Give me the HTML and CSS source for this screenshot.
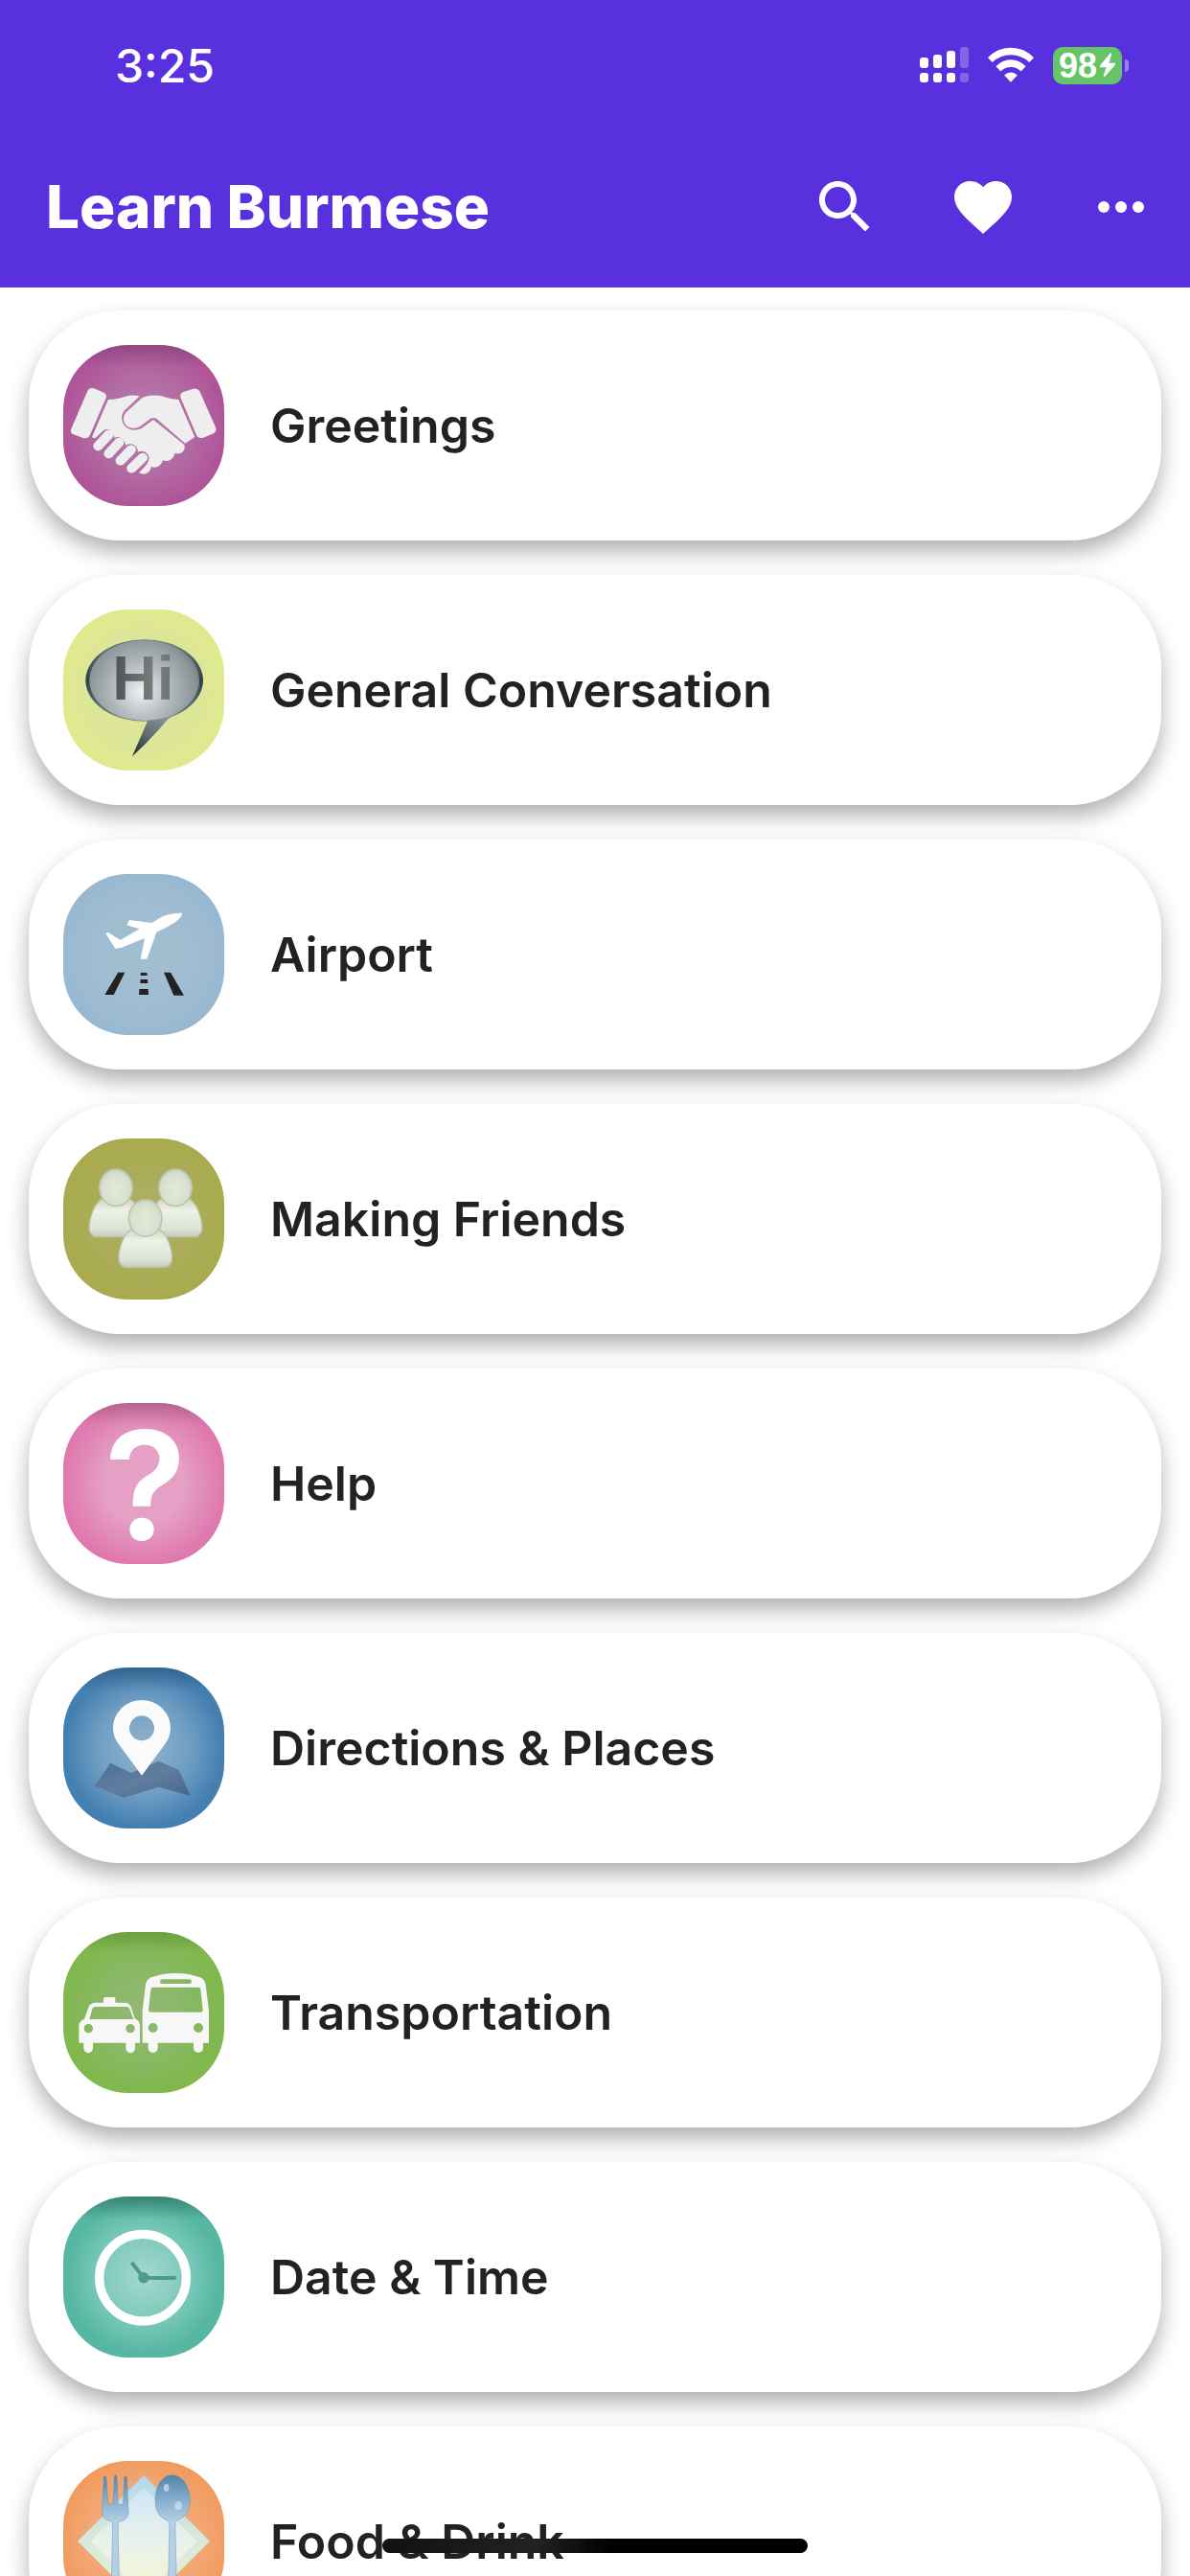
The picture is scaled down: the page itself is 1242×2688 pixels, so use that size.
FILE: index.html
```html
<!DOCTYPE html>
<html lang="en">
<head>
    <meta charset="UTF-8">
    <meta name="viewport" content="width=device-width, initial-scale=1.0">
    <title>Learn Burmese</title>
    <link rel="stylesheet" href="styles.css">
</head>
<body>
    <header>
        <div class="status-bar">
            <span class="time">3:25</span>
            <div class="status-icons">
                <svg width="51" height="38" viewBox="0 0 51 38" fill="white">
                    <rect x="0" y="11" width="9" height="11" rx="3"/>
                    <rect x="14" y="8" width="9" height="14" rx="3"/>
                    <rect x="28" y="4" width="9" height="18" rx="3"/>
                    <rect x="42" y="0" width="9" height="22" rx="3" opacity="0.25"/>
                    <rect x="0" y="27" width="9" height="10" rx="3"/>
                    <rect x="14" y="27" width="9" height="10" rx="3"/>
                    <rect x="28" y="27" width="9" height="10" rx="3"/>
                    <rect x="42" y="27" width="9" height="10" rx="3" opacity="0.25"/>
                </svg>
                <svg width="48" height="38" viewBox="695 146 143 112" fill="white">
                    <path d="M695 179 Q725 148 766.500 148 Q808 148 838 179 L824 193 Q799 170 766.500 170 Q734 170 709 193 Z"/>
                    <path d="M720 206 Q740 185 766.500 185 Q793 185 813 206 L798 221 Q784 208 766.500 208 Q749 208 735 221 Z"/>
                    <path d="M746 233 Q755 224 766.500 224 Q778 224 787 233 L766.500 255 Z"/>
                </svg>
                <div class="battery">
                    <span>98</span>
                    <svg width="18" height="26" viewBox="1047 163 52 79" fill="white">
                        <path d="M1082 164 Q1087 163 1085 170 L1077 196 H1095 Q1100 197 1097 202 L1064 239 Q1059 243 1060 236 L1069 209 H1050 Q1046 208 1049 203 Z"/>
                    </svg>
                </div>
            </div>
        </div>
        <div class="app-bar">
            <h1>Learn Burmese</h1>
            <button aria-label="Search">
                <svg viewBox="0 0 24 24"><path d="M15.500 14h-.79l-.28-.27C15.410 12.590 16 11.110 16 9.500 16 5.910 13.090 3 9.500 3S3 5.910 3 9.500 5.910 16 9.500 16c1.610 0 3.090-.59 4.230-1.570l.27.28v.79l5 4.990L20.490 19l-4.990-5zm-6 0C7.010 14 5 11.990 5 9.500S7.010 5 9.500 5 14 7.010 14 9.500 11.990 14 9.500 14z"/></svg>
            </button>
            <button aria-label="Favorites">
                <svg viewBox="0 0 24 24"><path d="M12 21.350l-1.450-1.320C5.400 15.360 2 12.280 2 8.500 2 5.420 4.420 3 7.500 3c1.740 0 3.410.81 4.500 2.090C13.090 3.810 14.760 3 16.500 3 19.580 3 22 5.420 22 8.500c0 3.780-3.400 6.860-8.550 11.540L12 21.350z"/></svg>
            </button>
            <button aria-label="More">
                <svg viewBox="0 0 24 24"><circle cx="6" cy="12" r="2"/><circle cx="12" cy="12" r="2"/><circle cx="18" cy="12" r="2"/></svg>
            </button>
        </div>
    </header>

    <main>
        <ul class="topics">
            <li><a href="#greetings">
                <svg class="icon greetings" viewBox="129 150 470 504" preserveAspectRatio="none">
                    <g fill="#eeeeee">
                        <path d="M201 292 Q207 282 219 286 L248 299 Q257 304 254 316 L206 434 Q200 444 187 441 L159 430 Q149 425 152 413 Z"/>
                        <path d="M478 298 L508 287 Q522 284 527 294 L574 408 Q578 420 568 427 L538 440 Q525 444 519 434 L472 316 Q469 303 478 298 Z"/>
                        <path d="M260 321 Q290 319 310 311 Q332 305 352 310 L306 357 Q293 376 307 401 Q327 424 357 412 L392 384 L483 463 Q487 482 472 488 Q463 491 455 488 Q450 509 434 513 Q427 514 420 511 Q414 532 396 533 Q390 533 386 531 Q384 547 371 553 Q360 557 350 550 L372 525 Q388 501 370 486 Q360 480 347 484 Q346 464 327 460 Q318 459 312 464 Q308 443 291 438 Q284 437 279 441 Q274 415 257 413 Q247 414 240 424 L224 440 Q217 443 213 438 Z"/>
                        <path d="M357 317 Q385 301 421 311 Q444 320 466 321 L513 438 L485 458 L403 382 Q392 374 382 382 L352 406 Q328 418 311 400 Q299 382 311 362 Z"/>
                    </g>
                    <g stroke="#eeeeee" stroke-width="29" stroke-linecap="round">
                        <path d="M262 430 L231 466"/>
                        <path d="M292 455 L262 490"/>
                        <path d="M327 478 L296 512"/>
                        <path d="M361 503 L329 536"/>
                    </g>
                </svg>
                <span>Greetings</span>
            </a></li>
            <li><a href="#general">
                <svg class="icon general" viewBox="30 48 504 504">
                    <defs>
                        <radialGradient id="bubble" gradientUnits="userSpaceOnUse" cx="275" cy="305" r="210">
                            <stop offset="0" stop-color="#eef1f2"/>
                            <stop offset="0.4" stop-color="#b6bcbf"/>
                            <stop offset="0.8" stop-color="#8a9597"/>
                            <stop offset="1" stop-color="#5c6c70"/>
                        </radialGradient>
                        <linearGradient id="tail" x1="0.6" y1="0" x2="0" y2="1">
                            <stop offset="0" stop-color="#8b9699"/>
                            <stop offset="0.5" stop-color="#5d6c70"/>
                            <stop offset="1" stop-color="#152a30"/>
                        </linearGradient>
                        <linearGradient id="rim" x1="0" y1="0" x2="0" y2="1">
                            <stop offset="0" stop-color="#6f7d80"/>
                            <stop offset="0.5" stop-color="#2c4247"/>
                            <stop offset="1" stop-color="#7d898b"/>
                        </linearGradient>
                        <linearGradient id="hi" x1="0" x2="1">
                            <stop offset="0" stop-color="#4e5254"/>
                            <stop offset="0.7" stop-color="#7c7f80"/>
                            <stop offset="1" stop-color="#6c7072"/>
                        </linearGradient>
                    </defs>
                    <ellipse cx="284" cy="270" rx="184" ry="128" fill="url(#rim)"/>
                    <path d="M294 397 L246 508 Q300 460 354 395 Q368 383 390 370 L300 370 Z" fill="url(#tail)"/>
                    <ellipse cx="284" cy="270" rx="172" ry="126" fill="url(#bubble)"/>
                    <text x="184" y="331" class="hi-text" fill="url(#hi)">Hi</text>
                </svg>
                <span>General Conversation</span>
            </a></li>
            <li><a href="#airport">
                <svg class="icon airport" viewBox="30 36 504 504">
                    <path fill="white" d="M163 222 Q168 217 174 221 L209 243 L269 208 L229 196 L237 180 L307 189 L341 169 Q370 157 402 158 Q402 166 393 176 Q380 190 322 218 L292 302 H272 L285 237 L211 267 L193 270 Z"/>
                    <g fill="#222222">
                        <path d="M202 344 H223 L188 414 H160 Z"/>
                        <path d="M345 344 H366 L408 416 H376 Z"/>
                        <path d="M273 345 H292 L293 354 H272 Z"/>
                        <path d="M272 366 H294 L295 378 H271 Z"/>
                        <path d="M268 396 H296 L297 414 H267 Z"/>
                    </g>
                </svg>
                <span>Airport</span>
            </a></li>
            <li><a href="#friends">
                <svg class="icon friends" viewBox="30 36 504 504">
                    <defs>
                        <radialGradient id="head" cx="0.5" cy="0.55" r="0.55">
                            <stop offset="0" stop-color="#e3e9d9"/>
                            <stop offset="0.75" stop-color="#d8e0cf"/>
                            <stop offset="1" stop-color="#c6cfbb"/>
                        </radialGradient>
                        <linearGradient id="torso" x1="0" y1="0" x2="0" y2="1">
                            <stop offset="0" stop-color="#cbd5c0"/>
                            <stop offset="0.3" stop-color="#edf1e8"/>
                            <stop offset="0.8" stop-color="#dae3d4"/>
                            <stop offset="1" stop-color="#c4cdb9"/>
                        </linearGradient>
                        <g id="person" stroke="#bac3aa" stroke-width="4">
                            <path fill="url(#torso)" d="M-43 34 Q-70 50 -82 105 Q-87 136 -76 147 Q-70 154 -57 154 H57 Q70 154 76 147 Q87 136 82 105 Q70 50 43 34 Z"/>
                            <ellipse fill="url(#head)" cx="0" cy="0" rx="52" ry="58"/>
                        </g>
                    </defs>
                    <use href="#person" x="195" y="190"/>
                    <use href="#person" x="381" y="190"/>
                    <use href="#person" x="287" y="285"/>
                </svg>
                <span>Making Friends</span>
            </a></li>
            <li><a href="#help">
                <svg class="icon help" viewBox="30 42 504 504">
                    <text x="287" y="471" class="mark-text" fill="white">?</text>
                </svg>
                <span>Help</span>
            </a></li>
            <li><a href="#directions">
                <svg class="icon directions" viewBox="30 36 504 504">
                    <defs>
                        <linearGradient id="map" x1="0" y1="0" x2="1" y2="1">
                            <stop offset="0" stop-color="#496f99"/>
                            <stop offset="0.5" stop-color="#617d9e"/>
                            <stop offset="1" stop-color="#47668f"/>
                        </linearGradient>
                    </defs>
                    <path fill="url(#map)" d="M178 335 L243 366 L328 329 L392 356 L429 438 L330 410 L219 443 L128 407 Z"/>
                    <path fill="#fafafa" fill-rule="evenodd" d="M276 138 C326 138 366 178 366 225 C366 244 360 260 350 274 L276 374 L202 274 C192 260 186 244 186 225 C186 178 226 138 276 138 Z M276 187 A39 39 0 1 0 276 265 A39 39 0 1 0 276 187 Z"/>
                </svg>
                <span>Directions &amp; Places</span>
            </a></li>
            <li><a href="#transportation">
                <svg class="icon transportation" viewBox="30 33 504 504">
                    <g fill="#f7f7f7" fill-rule="evenodd">
                        <path d="M156 254 V242 Q156 237 161 237 H188 Q193 237 193 242 V254 H223 Q237 255 242 267 L254 304 Q270 313 270 325 V380 H255 V397 A14 14 0 0 1 226 397 V380 H123 V397 A14 14 0 0 1 94 397 V380 H79 V326 Q80 312 96 305 L110 267 Q115 255 129 254 Z M130 267 Q124 267 121 274 L112 306 H250 L238 274 Q235 267 229 267 Z M109 321 A14 14 0 1 0 109 349 A14 14 0 1 0 109 321 Z M240 321 A14 14 0 1 0 240 349 A14 14 0 1 0 240 321 Z"/>
                        <path d="M382 162 Q423 162 458 175 Q474 182 476 198 L486 280 V380 H468 V396 A15 15 0 0 1 438 396 V380 H326 V396 A15 15 0 0 1 296 396 V380 H278 V280 L288 198 Q290 182 306 175 Q341 162 382 162 Z M340 181 A6 6 0 0 0 340 195 H425 A6 6 0 0 0 425 181 Z M312 206 Q305 206 304 213 L297 276 Q297 284 304 284 H460 Q468 284 467 276 L460 213 Q459 206 452 206 Z M311 318 A15 15 0 1 0 311 348 A15 15 0 1 0 311 318 Z M453 318 A15 15 0 1 0 453 348 A15 15 0 1 0 453 318 Z"/>
                    </g>
                </svg>
                <span>Transportation</span>
            </a></li>
            <li><a href="#date">
                <svg class="icon date" viewBox="30 36 504 504">
                    <circle cx="279" cy="290" r="136" fill="none" stroke="white" stroke-width="28"/>
                    <path d="M383 291 H282 L244 242" fill="none" stroke="#4d9b88" stroke-width="12"/>
                    <circle cx="282" cy="290" r="17" fill="#4d9b88"/>
                </svg>
                <span>Date &amp; Time</span>
            </a></li>
            <li><a href="#food">
                <svg class="icon food" viewBox="84 174 306 504" preserveAspectRatio="none">
                    <defs>
                        <linearGradient id="napkin" x1="0" y1="0" x2="0" y2="1">
                            <stop offset="0" stop-color="#b3d7ef"/>
                            <stop offset="0.4" stop-color="#d5e6dc"/>
                            <stop offset="1" stop-color="#eff3cf"/>
                        </linearGradient>
                        <linearGradient id="napkin-inner" x1="0" y1="0" x2="0" y2="1">
                            <stop offset="0" stop-color="#cde5f5"/>
                            <stop offset="0.5" stop-color="#e9f2ec"/>
                            <stop offset="1" stop-color="#f6f5cf"/>
                        </linearGradient>
                        <linearGradient id="steel" gradientUnits="userSpaceOnUse" x1="0" y1="215" x2="0" y2="365">
                            <stop offset="0" stop-color="#5183a8"/>
                            <stop offset="0.6" stop-color="#8bb3d1"/>
                            <stop offset="1" stop-color="#b5d0e5"/>
                        </linearGradient>
                    </defs>
                    <path fill="url(#napkin)" stroke="#a9bfae" d="M237 218 L363 425 L237 632 L111 425 Z"/>
                    <path fill="url(#napkin-inner)" d="M237 258 L338 425 L237 592 L136 425 Z"/>
                    <g fill="url(#steel)" stroke="#5d8bad">
                        <path d="M161 222 Q165 220 166 226 L169 305 Q174 317 179 305 L181 222 Q183 214 186 222 L188 305 Q193 317 198 305 L200 226 Q202 219 205 224 L208 340 Q206 358 191 364 Q187 366 188 380 L191 600 H175 L178 380 Q179 366 174 362 Q157 355 158 335 Z"/>
                        <path d="M291 218 C312 218 325 258 325 297 C325 335 313 353 300 360 Q296 364 297 380 L300 600 H283 L286 380 Q286 364 281 359 C267 352 259 330 259 297 C259 258 270 218 291 218 Z"/>
                    </g>
                    <ellipse cx="280" cy="258" rx="5" ry="12" fill="#c6dbea" opacity="0.8"/>
                    <ellipse cx="303" cy="314" rx="7" ry="14" fill="#d3e4f2" opacity="0.7"/>
                </svg>
                <span>Food &amp; Drink</span>
            </a></li>
        </ul>
    </main>

    <div class="home-indicator"></div>
</body>
</html>
```
FILE: styles.css
```css
* {
    box-sizing: border-box;
}
body {
    font-family: Inter, "Liberation Sans", sans-serif;
    margin: 0;
    height: 100vh;
    display: flex;
    flex-direction: column;
    overflow: hidden;
    background: white;
    color: #222222;
}
header {
    flex: none;
    background: #5930dd;
    color: white;
}
.status-bar {
    display: flex;
    justify-content: space-between;
    align-items: center;
    height: 132px;
    padding: 4px 64px 0 120px;
}
.time {
    font-size: 48px;
    font-weight: 500;
}
.status-icons {
    display: flex;
    align-items: center;
    gap: 20px;
}
.battery {
    position: relative;
    display: flex;
    align-items: center;
    justify-content: center;
    gap: 2px;
    width: 72px;
    height: 39px;
    margin-right: 7px;
    border-radius: 10px;
    background: #65c466;
    font: bold 36px/39px "Liberation Sans", sans-serif;
}
.battery::after {
    content: "";
    position: absolute;
    right: -7px;
    top: 13px;
    width: 4px;
    height: 13px;
    border-radius: 0 4px 4px 0;
    background: rgba(255,255,255,0.4);
}
.app-bar {
    display: flex;
    align-items: center;
    height: 168px;
    padding-left: 48px;
}
.app-bar h1 {
    flex: 1;
    margin: 0;
    font-size: 62px;
    line-height: 72px;
    font-weight: 800;
}
.app-bar button {
    width: 144px;
    height: 144px;
    padding: 36px;
    border: none;
    background: none;
    cursor: pointer;
}
.app-bar button svg {
    display: block;
    width: 72px;
    height: 72px;
    fill: white;
}
main {
    flex: 1;
    min-height: 0;
    overflow-y: auto;
    scrollbar-width: none;
}
.topics {
    list-style: none;
    display: flex;
    flex-direction: column;
    gap: 36px;
    margin: 0;
    padding: 24px 30px;
}
.topics a {
    display: flex;
    align-items: center;
    gap: 48px;
    padding: 36px;
    border-radius: 96px;
    background: white;
    box-shadow: 0 12px 22px rgba(0,0,0,0.3);
    color: inherit;
    font-size: 50px;
    line-height: 60px;
    font-weight: 600;
    text-decoration: none;
}
.icon {
    flex: none;
    width: 168px;
    height: 168px;
    border-radius: 68px;
}
.greetings {
    background: linear-gradient(rgba(90,50,90,0.35), transparent 14%), radial-gradient(#b578a8 20%, #b16aa2 45%, #b05499 72%);
}
.general {
    background: radial-gradient(#dde698 50%, #e0ea8c 75%);
}
.airport {
    background: radial-gradient(#a1bed1 30%, #9dbbd1 60%, #95b6d1 80%);
}
.friends {
    background: radial-gradient(#adae62 20%, #a8aa4c 75%);
}
.help {
    overflow: visible;
    background: linear-gradient(rgba(120,70,100,0.4), transparent 14%), radial-gradient(#e4a0c5 35%, #df78ae 72%);
}
.directions {
    background: linear-gradient(rgba(30,60,90,0.4), transparent 14%), radial-gradient(#87afcb 10%, #719fc3 40%, #437fb1 70%);
}
.transportation {
    background: linear-gradient(rgba(70,110,40,0.35), transparent 12%), radial-gradient(#90b870 15%, #89b865 40%, #80b84d 68%);
}
.date {
    background: linear-gradient(rgba(30,80,70,0.5), transparent 14%), radial-gradient(#a0d6cb 5%, #7dcabb 38%, #55b6a2 68%);
}
.food {
    background: radial-gradient(#f2a774 50%, #f19a5c 75%);
}
.hi-text {
    font: bold 193px "Liberation Sans", sans-serif;
}
.mark-text {
    font: 600 472px Inter, sans-serif;
    text-anchor: middle;
}
.home-indicator {
    position: fixed;
    left: 50%;
    bottom: 24px;
    width: 444px;
    height: 15px;
    transform: translateX(-50%);
    border-radius: 8px;
    background: linear-gradient(to right, #111111, #222222 36%, #000000 54%);
}
```
